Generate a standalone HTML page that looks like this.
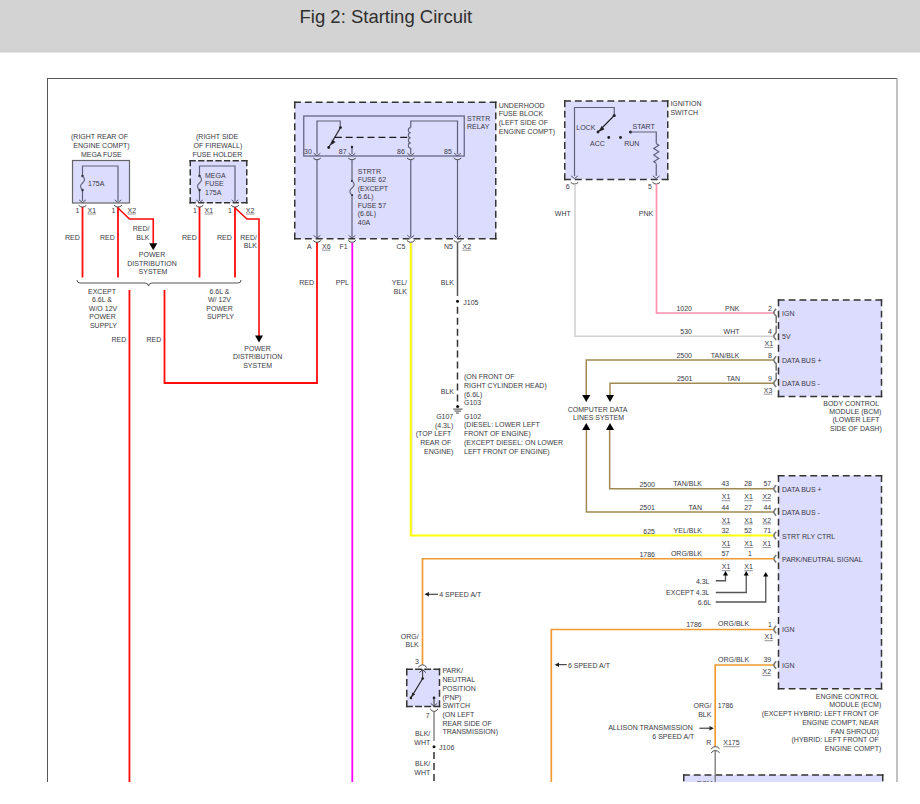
<!DOCTYPE html>
<html><head><meta charset="utf-8"><style>
html,body{margin:0;padding:0;background:#fff;width:920px;height:804px;overflow:hidden}
#hdr{position:absolute;left:0;top:0;width:920px;height:52px;background:#d3d3d3}
#ttl{position:absolute;left:299.5px;top:5px;font:18.5px/24px "Liberation Sans",sans-serif;color:#2e2e2e;white-space:nowrap}
#hb1{position:absolute;left:0;top:51px;width:920px;height:1px;background:#cecece}
#hb2{position:absolute;left:0;top:52px;width:920px;height:1px;background:#e6e6e6}
svg{position:absolute;left:0;top:0}
svg text{font-family:"Liberation Sans",sans-serif}
</style></head><body>
<div id="hdr"><div id="ttl">Fig 2: Starting Circuit</div></div><div id="hb1"></div><div id="hb2"></div>
<svg width="920" height="804" viewBox="0 0 920 804">
<defs><clipPath id="cp"><rect x="0" y="53" width="920" height="729"/></clipPath></defs>
<g clip-path="url(#cp)">
<line x1="47.5" y1="78" x2="47.5" y2="782" stroke="#555" stroke-width="1" />
<line x1="47" y1="78.5" x2="897" y2="78.5" stroke="#555" stroke-width="1" />
<line x1="897" y1="78" x2="897" y2="782" stroke="#999" stroke-width="1.2" />
<text x="71" y="139.1" fill="#3a3a44" font-size="7">(RIGHT REAR OF</text>
<text x="73.3" y="147.9" fill="#3a3a44" font-size="7">ENGINE COMPT)</text>
<text x="80.9" y="156.6" fill="#3a3a44" font-size="7">MEGA FUSE</text>
<rect x="72.5" y="160.5" width="57" height="42.5" fill="#dcdcff" stroke="#666" stroke-width="1.2" />
<polyline points="82.5,201 82.5,166 118,166 118,201" fill="none" stroke="#606078" stroke-width="1.2" />
<rect x="79" y="176.5" width="7" height="13" fill="#dcdcff" stroke="none" stroke-width="1" />
<circle cx="82.5" cy="176" r="1.2" fill="#222"/>
<circle cx="82.5" cy="190" r="1.2" fill="#222"/>
<path d="M82.5,176 Q86.5,179.5 82.5,183 Q78.5,186.5 82.5,190" fill="none" stroke="#606078" stroke-width="1.1" />
<text x="88" y="185.9" fill="#3a3a44" font-size="7">175A</text>
<polyline points="79.1,199.9 82.5,202.5 85.9,199.9" fill="none" stroke="#555566" stroke-width="1" />
<polyline points="114.6,199.9 118,202.5 121.4,199.9" fill="none" stroke="#555566" stroke-width="1" />
<text x="75.5" y="212.7" fill="#3a3a44" font-size="7">1</text>
<text x="87.5" y="212.7" fill="#3a3a44" font-size="7">X1</text>
<line x1="87.5" y1="214.0" x2="96.06" y2="214.0" stroke="#8a8a96" stroke-width="0.9" />
<text x="111.5" y="212.7" fill="#3a3a44" font-size="7">1</text>
<text x="127.5" y="212.7" fill="#3a3a44" font-size="7">X2</text>
<line x1="127.5" y1="214.0" x2="136.06" y2="214.0" stroke="#8a8a96" stroke-width="0.9" />
<text x="196" y="139.1" fill="#3a3a44" font-size="7">(RIGHT SIDE</text>
<text x="193.5" y="147.9" fill="#3a3a44" font-size="7">OF FIREWALL)</text>
<text x="192.5" y="156.9" fill="#3a3a44" font-size="7">FUSE HOLDER</text>
<rect x="190.25" y="160.75" width="56.5" height="42" fill="#dcdcff" stroke="none" stroke-width="1" />
<line x1="189.5" y1="160.75" x2="247.5" y2="160.75" stroke="#333" stroke-width="1.5" stroke-dasharray="6.3,2.317"/>
<line x1="189.5" y1="202.75" x2="247.5" y2="202.75" stroke="#333" stroke-width="1.5" stroke-dasharray="6.3,2.317"/>
<line x1="190.25" y1="160.0" x2="190.25" y2="203.5" stroke="#333" stroke-width="1.5" stroke-dasharray="6.3,3.0"/>
<line x1="246.75" y1="160.0" x2="246.75" y2="203.5" stroke="#333" stroke-width="1.5" stroke-dasharray="6.3,3.0"/>
<polyline points="199.5,201 199.5,166 235,166 235,201" fill="none" stroke="#606078" stroke-width="1.2" />
<rect x="196" y="176.5" width="7" height="13" fill="#dcdcff" stroke="none" stroke-width="1" />
<circle cx="199.5" cy="176" r="1.2" fill="#222"/>
<circle cx="199.5" cy="190" r="1.2" fill="#222"/>
<path d="M199.5,176 Q203.5,179.5 199.5,183 Q195.5,186.5 199.5,190" fill="none" stroke="#606078" stroke-width="1.1" />
<text x="205" y="177.9" fill="#3a3a44" font-size="7">MEGA</text>
<text x="205" y="186.4" fill="#3a3a44" font-size="7">FUSE</text>
<text x="205" y="194.9" fill="#3a3a44" font-size="7">175A</text>
<polyline points="196.1,199.9 199.5,202.5 202.9,199.9" fill="none" stroke="#555566" stroke-width="1" />
<polyline points="231.6,199.9 235,202.5 238.4,199.9" fill="none" stroke="#555566" stroke-width="1" />
<text x="193" y="212.7" fill="#3a3a44" font-size="7">1</text>
<text x="204.5" y="212.7" fill="#3a3a44" font-size="7">X1</text>
<line x1="204.5" y1="214.0" x2="213.06" y2="214.0" stroke="#8a8a96" stroke-width="0.9" />
<text x="228" y="212.7" fill="#3a3a44" font-size="7">1</text>
<text x="245.75" y="212.7" fill="#3a3a44" font-size="7">X2</text>
<line x1="245.75" y1="214.0" x2="254.31" y2="214.0" stroke="#8a8a96" stroke-width="0.9" />
<line x1="82.5" y1="207" x2="82.5" y2="277.5" stroke="#ff0a0a" stroke-width="1.8" />
<line x1="118" y1="207" x2="118" y2="277.5" stroke="#ff0a0a" stroke-width="1.8" />
<line x1="199.5" y1="207" x2="199.5" y2="277.5" stroke="#ff0a0a" stroke-width="1.8" />
<line x1="235" y1="207" x2="235" y2="277.5" stroke="#ff0a0a" stroke-width="1.8" />
<polyline points="118,208 129.5,219 153.25,219 153.25,244" fill="none" stroke="#ff0a0a" stroke-width="1.6" />
<polygon points="149.25,243.2 157.25,243.2 153.25,250.2" fill="#000"/>
<polyline points="235,208 247,219 259,219 259,336" fill="none" stroke="#ff0a0a" stroke-width="1.6" />
<polygon points="255.0,335.4 263.0,335.4 259,342.4" fill="#000"/>
<path d="M78.7,205.3 Q82.5,208.9 86.3,205.3" fill="none" stroke="#444" stroke-width="1" />
<path d="M114.2,205.3 Q118,208.9 121.8,205.3" fill="none" stroke="#444" stroke-width="1" />
<path d="M195.7,205.3 Q199.5,208.9 203.3,205.3" fill="none" stroke="#444" stroke-width="1" />
<path d="M231.2,205.3 Q235,208.9 238.8,205.3" fill="none" stroke="#444" stroke-width="1" />
<text x="65" y="239.9" fill="#3a3a44" font-size="7">RED</text>
<text x="100" y="239.9" fill="#3a3a44" font-size="7">RED</text>
<text x="149.5" y="230.9" text-anchor="end" fill="#3a3a44" font-size="7">RED/</text>
<text x="149.5" y="239.9" text-anchor="end" fill="#3a3a44" font-size="7">BLK</text>
<text x="152" y="257.4" text-anchor="middle" fill="#3a3a44" font-size="7">POWER</text>
<text x="152" y="266.1" text-anchor="middle" fill="#3a3a44" font-size="7">DISTRIBUTION</text>
<text x="153" y="274.4" text-anchor="middle" fill="#3a3a44" font-size="7">SYSTEM</text>
<text x="182" y="239.9" fill="#3a3a44" font-size="7">RED</text>
<text x="217" y="239.9" fill="#3a3a44" font-size="7">RED</text>
<text x="257" y="239.9" text-anchor="end" fill="#3a3a44" font-size="7">RED/</text>
<text x="257" y="248.2" text-anchor="end" fill="#3a3a44" font-size="7">BLK</text>
<path d="M77,280 Q77,283 80,283 L145,283 Q148,283 148.5,286 Q149,283 152,283 L238,283 Q241,283 241,280" fill="none" stroke="#555" stroke-width="1" />
<text x="102" y="293.9" text-anchor="middle" fill="#3a3a44" font-size="7">EXCEPT</text>
<text x="102" y="302.4" text-anchor="middle" fill="#3a3a44" font-size="7">6.6L &amp;</text>
<text x="103" y="310.9" text-anchor="middle" fill="#3a3a44" font-size="7">W/O 12V</text>
<text x="102.5" y="319.4" text-anchor="middle" fill="#3a3a44" font-size="7">POWER</text>
<text x="103.5" y="327.9" text-anchor="middle" fill="#3a3a44" font-size="7">SUPPLY</text>
<text x="219.5" y="293.9" text-anchor="middle" fill="#3a3a44" font-size="7">6.6L &amp;</text>
<text x="219.5" y="302.4" text-anchor="middle" fill="#3a3a44" font-size="7">W/ 12V</text>
<text x="219.5" y="310.9" text-anchor="middle" fill="#3a3a44" font-size="7">POWER</text>
<text x="220.5" y="319.4" text-anchor="middle" fill="#3a3a44" font-size="7">SUPPLY</text>
<line x1="129.45" y1="290" x2="129.45" y2="782" stroke="#ff0a0a" stroke-width="1.8" />
<polyline points="164.5,290 164.5,383 317,383 317,242" fill="none" stroke="#ff0a0a" stroke-width="1.8" />
<text x="111.5" y="342.4" fill="#3a3a44" font-size="7">RED</text>
<text x="146.5" y="342.4" fill="#3a3a44" font-size="7">RED</text>
<text x="257.6" y="350.9" text-anchor="middle" fill="#3a3a44" font-size="7">POWER</text>
<text x="257.6" y="359.2" text-anchor="middle" fill="#3a3a44" font-size="7">DISTRIBUTION</text>
<text x="257.6" y="367.9" text-anchor="middle" fill="#3a3a44" font-size="7">SYSTEM</text>
<rect x="294.75" y="102.25" width="201" height="136.5" fill="#dcdcff" stroke="none" stroke-width="1" />
<line x1="294.0" y1="102.25" x2="496.5" y2="102.25" stroke="#333" stroke-width="1.5" stroke-dasharray="6.9,3.967"/>
<line x1="294.0" y1="238.75" x2="496.5" y2="238.75" stroke="#333" stroke-width="1.5" stroke-dasharray="6.9,3.967"/>
<line x1="294.75" y1="101.5" x2="294.75" y2="239.5" stroke="#333" stroke-width="1.5" stroke-dasharray="6.9,4.025"/>
<line x1="495.75" y1="101.5" x2="495.75" y2="239.5" stroke="#333" stroke-width="1.5" stroke-dasharray="6.9,4.025"/>
<rect x="303.75" y="116" width="160.5" height="40" fill="#dcdcff" stroke="#666688" stroke-width="1.3" />
<text x="467" y="121.0" fill="#3a3a44" font-size="7">STRTR</text>
<text x="467" y="128.8" fill="#3a3a44" font-size="7">RELAY</text>
<text x="498.75" y="107.75" fill="#3a3a44" font-size="7">UNDERHOOD</text>
<text x="498.75" y="116.0" fill="#3a3a44" font-size="7">FUSE BLOCK</text>
<text x="498.75" y="124.75" fill="#3a3a44" font-size="7">(LEFT SIDE OF</text>
<text x="498.75" y="133.5" fill="#3a3a44" font-size="7">ENGINE COMPT)</text>
<polyline points="317,154 317,121 340.25,121 340.25,127.5" fill="none" stroke="#606078" stroke-width="1.2" />
<circle cx="340.5" cy="127.6" r="1.4" fill="#222"/>
<line x1="340.5" y1="127.6" x2="328.7" y2="147.5" stroke="#222" stroke-width="1.1" />
<polygon points="331.2,145 332.0,139.6 335.6,141.9" fill="#222"/>
<circle cx="328.7" cy="147.5" r="1.4" fill="#222"/>
<line x1="334.8" y1="137.4" x2="408.3" y2="137.4" stroke="#1a1a1a" stroke-width="1.4" stroke-dasharray="7,3.9"/>
<line x1="352" y1="147" x2="352" y2="154" stroke="#606078" stroke-width="1.2" />
<circle cx="352" cy="147" r="1.2" fill="#222"/>
<polyline points="410.75,127.5 410.75,121 457.5,121 457.5,154" fill="none" stroke="#606078" stroke-width="1.2" />
<path d="M410.75,127.6 c-3.2,0 -3.2,5.1 0,5.1 c-3.2,0 -3.2,5.1 0,5.1 c-3.2,0 -3.2,5.1 0,5.1 c-3.2,0 -3.2,5.1 0,5.1" fill="none" stroke="#606078" stroke-width="1.1" />
<line x1="410.75" y1="148" x2="410.75" y2="154" stroke="#606078" stroke-width="1.2" />
<polyline points="313.6,153.20000000000002 317,155.8 320.4,153.20000000000002" fill="none" stroke="#555566" stroke-width="1" />
<path d="M313.2,158 Q317,161.6 320.8,158" fill="none" stroke="#444" stroke-width="1" />
<polyline points="348.6,153.20000000000002 352,155.8 355.4,153.20000000000002" fill="none" stroke="#555566" stroke-width="1" />
<path d="M348.2,158 Q352,161.6 355.8,158" fill="none" stroke="#444" stroke-width="1" />
<polyline points="407.35,153.20000000000002 410.75,155.8 414.15,153.20000000000002" fill="none" stroke="#555566" stroke-width="1" />
<path d="M406.95,158 Q410.75,161.6 414.55,158" fill="none" stroke="#444" stroke-width="1" />
<polyline points="454.1,153.20000000000002 457.5,155.8 460.9,153.20000000000002" fill="none" stroke="#555566" stroke-width="1" />
<path d="M453.7,158 Q457.5,161.6 461.3,158" fill="none" stroke="#444" stroke-width="1" />
<text x="304" y="153.9" fill="#3a3a44" font-size="7">30</text>
<text x="338.75" y="153.9" fill="#3a3a44" font-size="7">87</text>
<text x="397" y="153.9" fill="#3a3a44" font-size="7">86</text>
<text x="444" y="153.9" fill="#3a3a44" font-size="7">85</text>
<line x1="317" y1="160" x2="317" y2="237" stroke="#606078" stroke-width="1.2" />
<line x1="410.75" y1="160" x2="410.75" y2="237" stroke="#606078" stroke-width="1.2" />
<line x1="457.5" y1="160" x2="457.5" y2="237" stroke="#606078" stroke-width="1.2" />
<line x1="352" y1="160" x2="352" y2="181" stroke="#606078" stroke-width="1.2" />
<line x1="352" y1="195" x2="352" y2="237" stroke="#606078" stroke-width="1.2" />
<circle cx="352" cy="181" r="1.1" fill="#222"/>
<circle cx="352" cy="195" r="1.1" fill="#222"/>
<path d="M352,181 Q356.3,184.5 352,188 Q347.7,191.5 352,195" fill="none" stroke="#606078" stroke-width="1.1" />
<text x="357.75" y="173.9" fill="#3a3a44" font-size="7">STRTR</text>
<text x="357.75" y="182.4" fill="#3a3a44" font-size="7">FUSE 62</text>
<text x="357.75" y="190.9" fill="#3a3a44" font-size="7">(EXCEPT</text>
<text x="357.75" y="199.4" fill="#3a3a44" font-size="7">6.6L)</text>
<text x="357.75" y="207.9" fill="#3a3a44" font-size="7">FUSE 57</text>
<text x="357.75" y="216.4" fill="#3a3a44" font-size="7">(6.6L)</text>
<text x="357.75" y="224.9" fill="#3a3a44" font-size="7">40A</text>
<polyline points="313.6,235.4 317,238 320.4,235.4" fill="none" stroke="#555566" stroke-width="1" />
<path d="M313.2,240.5 Q317,244.1 320.8,240.5" fill="none" stroke="#444" stroke-width="1" />
<polyline points="348.6,235.4 352,238 355.4,235.4" fill="none" stroke="#555566" stroke-width="1" />
<path d="M348.2,240.5 Q352,244.1 355.8,240.5" fill="none" stroke="#444" stroke-width="1" />
<polyline points="407.35,235.4 410.75,238 414.15,235.4" fill="none" stroke="#555566" stroke-width="1" />
<path d="M406.95,240.5 Q410.75,244.1 414.55,240.5" fill="none" stroke="#444" stroke-width="1" />
<polyline points="454.1,235.4 457.5,238 460.9,235.4" fill="none" stroke="#555566" stroke-width="1" />
<path d="M453.7,240.5 Q457.5,244.1 461.3,240.5" fill="none" stroke="#444" stroke-width="1" />
<text x="307" y="248.9" fill="#3a3a44" font-size="7">A</text>
<text x="322" y="248.9" fill="#3a3a44" font-size="7">X6</text>
<line x1="322" y1="250.2" x2="330.56" y2="250.2" stroke="#8a8a96" stroke-width="0.9" />
<text x="339.5" y="248.9" fill="#3a3a44" font-size="7">F1</text>
<text x="396.5" y="248.9" fill="#3a3a44" font-size="7">C5</text>
<text x="444" y="248.9" fill="#3a3a44" font-size="7">N5</text>
<text x="462.5" y="248.9" fill="#3a3a44" font-size="7">X2</text>
<line x1="462.5" y1="250.2" x2="471.06" y2="250.2" stroke="#8a8a96" stroke-width="0.9" />
<line x1="352.3" y1="243" x2="352.3" y2="782" stroke="#ff00ff" stroke-width="1.8" />
<line x1="411.9" y1="243" x2="411.9" y2="536.5" stroke="#c8c8d0" stroke-width="1" />
<polyline points="410.75,243 410.75,535.5 774,535.5" fill="none" stroke="#ffff00" stroke-width="2" />
<line x1="457.5" y1="243" x2="457.5" y2="296" stroke="#555555" stroke-width="1.5" />
<circle cx="457.5" cy="301.3" r="1.5" fill="#111"/>
<line x1="457.5" y1="306.8" x2="457.5" y2="401.4" stroke="#333" stroke-width="1.5" stroke-dasharray="7,3.95"/>
<circle cx="457.6" cy="406.6" r="1.5" fill="#111"/>
<line x1="453.2" y1="409.1" x2="462.6" y2="409.1" stroke="#333" stroke-width="0.9" />
<line x1="454.4" y1="411.1" x2="460.9" y2="411.1" stroke="#333" stroke-width="0.9" />
<line x1="455.9" y1="413.1" x2="458.9" y2="413.1" stroke="#333" stroke-width="0.9" />
<text x="314" y="285.4" text-anchor="end" fill="#3a3a44" font-size="7">RED</text>
<text x="349" y="285.4" text-anchor="end" fill="#3a3a44" font-size="7">PPL</text>
<text x="407" y="285.4" text-anchor="end" fill="#3a3a44" font-size="7">YEL/</text>
<text x="407" y="293.65" text-anchor="end" fill="#3a3a44" font-size="7">BLK</text>
<text x="454" y="285.4" text-anchor="end" fill="#3a3a44" font-size="7">BLK</text>
<text x="463.25" y="304.9" fill="#3a3a44" font-size="7">J105</text>
<text x="454" y="394.15" text-anchor="end" fill="#3a3a44" font-size="7">BLK</text>
<text x="464" y="379.15" fill="#3a3a44" font-size="7">(ON FRONT OF</text>
<text x="464" y="387.85" fill="#3a3a44" font-size="7">RIGHT CYLINDER HEAD)</text>
<text x="464" y="396.55" fill="#3a3a44" font-size="7">(6.6L)</text>
<text x="464" y="405.25" fill="#3a3a44" font-size="7">G103</text>
<text x="464" y="418.65" fill="#3a3a44" font-size="7">G102</text>
<text x="464" y="427.4" fill="#3a3a44" font-size="7">(DIESEL: LOWER LEFT</text>
<text x="464" y="436.15" fill="#3a3a44" font-size="7">FRONT OF ENGINE)</text>
<text x="464" y="444.9" fill="#3a3a44" font-size="7">(EXCEPT DIESEL: ON LOWER</text>
<text x="464" y="453.65" fill="#3a3a44" font-size="7">LEFT FRONT OF ENGINE)</text>
<text x="453.25" y="419.15" text-anchor="end" fill="#3a3a44" font-size="7">G107</text>
<text x="453.25" y="427.9" text-anchor="end" fill="#3a3a44" font-size="7">(4.3L)</text>
<text x="451.25" y="436.15" text-anchor="end" fill="#3a3a44" font-size="7">(TOP LEFT</text>
<text x="451.25" y="445.4" text-anchor="end" fill="#3a3a44" font-size="7">REAR OF</text>
<text x="453.25" y="454.15" text-anchor="end" fill="#3a3a44" font-size="7">ENGINE)</text>
<rect x="564.75" y="101" width="103" height="78.5" fill="#dcdcff" stroke="none" stroke-width="1" />
<line x1="564.0" y1="101" x2="668.5" y2="101" stroke="#333" stroke-width="1.5" stroke-dasharray="6.9,3.944"/>
<line x1="564.0" y1="179.5" x2="668.5" y2="179.5" stroke="#333" stroke-width="1.5" stroke-dasharray="6.9,3.944"/>
<line x1="564.75" y1="100.25" x2="564.75" y2="180.25" stroke="#333" stroke-width="1.5" stroke-dasharray="6.9,3.543"/>
<line x1="667.75" y1="100.25" x2="667.75" y2="180.25" stroke="#333" stroke-width="1.5" stroke-dasharray="6.9,3.543"/>
<text x="670.4" y="106.1" fill="#3a3a44" font-size="7">IGNITION</text>
<text x="670.4" y="115.2" fill="#3a3a44" font-size="7">SWITCH</text>
<polyline points="574.5,176 574.5,107.5 614.25,107.5 614.25,115.5" fill="none" stroke="#606078" stroke-width="1.2" />
<circle cx="614.25" cy="115.5" r="1.5" fill="#222"/>
<line x1="614.25" y1="115.5" x2="598" y2="132" stroke="#222" stroke-width="1.1" />
<polygon points="599.5,131.5 601.3,126 604.6,129.2" fill="#222"/>
<circle cx="598" cy="132" r="1.4" fill="#222"/>
<circle cx="608.75" cy="137.5" r="1.4" fill="#222"/>
<circle cx="620.5" cy="137.5" r="1.4" fill="#222"/>
<circle cx="630.5" cy="132" r="1.5" fill="#222"/>
<polyline points="630.5,132 656.25,132 656.25,143.5" fill="none" stroke="#606078" stroke-width="1.2" />
<path d="M656.25,143.5 l2.5,1.7 l-5,3.3 l5,3.3 l-5,3.3 l5,3.3 l-5,3.3 l2.5,1.6" fill="none" stroke="#606078" stroke-width="1.2" />
<line x1="656.25" y1="163.7" x2="656.25" y2="176" stroke="#606078" stroke-width="1.2" />
<polyline points="571.1,175.9 574.5,178.5 577.9,175.9" fill="none" stroke="#555566" stroke-width="1" />
<polyline points="652.85,175.9 656.25,178.5 659.65,175.9" fill="none" stroke="#555566" stroke-width="1" />
<path d="M570.7,182.3 Q574.5,185.9 578.3,182.3" fill="none" stroke="#444" stroke-width="1" />
<path d="M652.45,182.3 Q656.25,185.9 660.05,182.3" fill="none" stroke="#444" stroke-width="1" />
<text x="576.25" y="130.4" fill="#3a3a44" font-size="7">LOCK</text>
<text x="590" y="146.15" fill="#3a3a44" font-size="7">ACC</text>
<text x="624.25" y="146.15" fill="#3a3a44" font-size="7">RUN</text>
<text x="632.5" y="129.4" fill="#3a3a44" font-size="7">START</text>
<text x="565.75" y="188.9" fill="#3a3a44" font-size="7">6</text>
<text x="648" y="188.9" fill="#3a3a44" font-size="7">5</text>
<text x="570.75" y="215.9" text-anchor="end" fill="#3a3a44" font-size="7">WHT</text>
<text x="653.25" y="215.9" text-anchor="end" fill="#3a3a44" font-size="7">PNK</text>
<polyline points="575,184 575,336.25 774,336.25" fill="none" stroke="#d0d0d0" stroke-width="1.5" />
<polyline points="656.5,184 656.5,313 774,313" fill="none" stroke="#ff90b0" stroke-width="1.7" />
<rect x="778.5" y="300" width="103" height="96.5" fill="#dcdcff" stroke="none" stroke-width="1" />
<line x1="777.75" y1="300" x2="882.25" y2="300" stroke="#333" stroke-width="1.5" stroke-dasharray="6.9,3.944"/>
<line x1="777.75" y1="396.5" x2="882.25" y2="396.5" stroke="#333" stroke-width="1.5" stroke-dasharray="6.9,3.944"/>
<line x1="778.5" y1="299.25" x2="778.5" y2="397.25" stroke="#333" stroke-width="1.5" stroke-dasharray="6.9,4.487"/>
<line x1="881.5" y1="299.25" x2="881.5" y2="397.25" stroke="#333" stroke-width="1.5" stroke-dasharray="6.9,4.487"/>
<polyline points="586.25,395 586.25,360 774,360" fill="none" stroke="#a08a52" stroke-width="1.5" />
<polyline points="610,395 610,383.25 774,383.25" fill="none" stroke="#a08a52" stroke-width="1.5" />
<polygon points="582.25,395 590.25,395 586.25,402" fill="#000"/>
<polygon points="606.0,395 614.0,395 610,402" fill="#000"/>
<text x="597.5" y="411.9" text-anchor="middle" fill="#3a3a44" font-size="7">COMPUTER DATA</text>
<text x="598.6" y="420.4" text-anchor="middle" fill="#3a3a44" font-size="7">LINES SYSTEM</text>
<polygon points="582.25,430 590.25,430 586.25,423" fill="#000"/>
<polygon points="606.0,430 614.0,430 610,423" fill="#000"/>
<polyline points="586.4,430 586.4,512 774,512" fill="none" stroke="#a08a52" stroke-width="1.5" />
<polyline points="609.65,430 609.65,488.75 774,488.75" fill="none" stroke="#a08a52" stroke-width="1.5" />
<text x="692" y="311.15" text-anchor="end" fill="#3a3a44" font-size="7">1020</text>
<text x="739.5" y="311.15" text-anchor="end" fill="#3a3a44" font-size="7">PNK</text>
<text x="772" y="311.15" text-anchor="end" fill="#3a3a44" font-size="7">2</text>
<text x="782" y="316.15" fill="#3a3a44" font-size="7">IGN</text>
<text x="692" y="334.4" text-anchor="end" fill="#3a3a44" font-size="7">530</text>
<text x="739.5" y="334.4" text-anchor="end" fill="#3a3a44" font-size="7">WHT</text>
<text x="772" y="334.4" text-anchor="end" fill="#3a3a44" font-size="7">4</text>
<text x="782" y="339.4" fill="#3a3a44" font-size="7">5V</text>
<text x="764.5" y="346.15" fill="#3a3a44" font-size="7">X1</text>
<line x1="764.5" y1="347.45" x2="773.06" y2="347.45" stroke="#8a8a96" stroke-width="0.9" />
<text x="692" y="357.9" text-anchor="end" fill="#3a3a44" font-size="7">2500</text>
<text x="739.5" y="357.9" text-anchor="end" fill="#3a3a44" font-size="7">TAN/BLK</text>
<text x="772" y="357.9" text-anchor="end" fill="#3a3a44" font-size="7">8</text>
<text x="782" y="363.15" fill="#3a3a44" font-size="7">DATA BUS +</text>
<text x="692.5" y="381.15" text-anchor="end" fill="#3a3a44" font-size="7">2501</text>
<text x="740" y="381.15" text-anchor="end" fill="#3a3a44" font-size="7">TAN</text>
<text x="772" y="381.15" text-anchor="end" fill="#3a3a44" font-size="7">9</text>
<text x="782" y="386.15" fill="#3a3a44" font-size="7">DATA BUS -</text>
<text x="763.75" y="392.9" fill="#3a3a44" font-size="7">X3</text>
<line x1="763.75" y1="394.2" x2="772.31" y2="394.2" stroke="#8a8a96" stroke-width="0.9" />
<text x="823.25" y="405.65" fill="#3a3a44" font-size="7">BODY CONTROL</text>
<text x="829.25" y="413.65" fill="#3a3a44" font-size="7">MODULE (BCM)</text>
<text x="832.5" y="422.4" fill="#3a3a44" font-size="7">(LOWER LEFT</text>
<text x="830" y="431.15" fill="#3a3a44" font-size="7">SIDE OF DASH)</text>
<path d="M776.2,308.7 Q773.2,312.0 773.9,312.5 Q773.2,313.0 776.2,316.3 L776.2,323.3" fill="none" stroke="#7a7a7a" stroke-width="1.6" />
<path d="M776.2,325.45 L776.2,332.45 Q773.2,335.75 773.9,336.25 Q773.2,336.75 776.2,340.05" fill="none" stroke="#7a7a7a" stroke-width="1.6" />
<path d="M776.2,356.2 Q773.2,359.5 773.9,360 Q773.2,360.5 776.2,363.8 L776.2,370.8" fill="none" stroke="#7a7a7a" stroke-width="1.6" />
<path d="M776.2,372.45 L776.2,379.45 Q773.2,382.75 773.9,383.25 Q773.2,383.75 776.2,387.05" fill="none" stroke="#7a7a7a" stroke-width="1.6" />
<rect x="778.5" y="475.75" width="103" height="213" fill="#dcdcff" stroke="none" stroke-width="1" />
<line x1="777.75" y1="475.75" x2="882.25" y2="475.75" stroke="#333" stroke-width="1.5" stroke-dasharray="6.9,3.944"/>
<line x1="777.75" y1="688.75" x2="882.25" y2="688.75" stroke="#333" stroke-width="1.5" stroke-dasharray="6.9,3.944"/>
<line x1="778.5" y1="475.0" x2="778.5" y2="689.5" stroke="#333" stroke-width="1.5" stroke-dasharray="6.9,4.026"/>
<line x1="881.5" y1="475.0" x2="881.5" y2="689.5" stroke="#333" stroke-width="1.5" stroke-dasharray="6.9,4.026"/>
<text x="655" y="486.75" text-anchor="end" fill="#3a3a44" font-size="7">2500</text>
<text x="702" y="486.25" text-anchor="end" fill="#3a3a44" font-size="7">TAN/BLK</text>
<text x="729.25" y="486.4" text-anchor="end" fill="#3a3a44" font-size="7">43</text>
<text x="752" y="486.4" text-anchor="end" fill="#3a3a44" font-size="7">28</text>
<text x="771.25" y="486.4" text-anchor="end" fill="#3a3a44" font-size="7">57</text>
<text x="721.75" y="499.4" fill="#3a3a44" font-size="7">X1</text>
<line x1="721.75" y1="500.7" x2="730.31" y2="500.7" stroke="#8a8a96" stroke-width="0.9" />
<text x="744.25" y="499.4" fill="#3a3a44" font-size="7">X1</text>
<line x1="744.25" y1="500.7" x2="752.81" y2="500.7" stroke="#8a8a96" stroke-width="0.9" />
<text x="762.5" y="499.4" fill="#3a3a44" font-size="7">X2</text>
<line x1="762.5" y1="500.7" x2="771.06" y2="500.7" stroke="#8a8a96" stroke-width="0.9" />
<text x="782" y="491.9" fill="#3a3a44" font-size="7">DATA BUS +</text>
<path d="M776.2,484.95 Q773.2,488.25 773.9,488.75 Q773.2,489.25 776.2,492.55" fill="none" stroke="#7a7a7a" stroke-width="1.6" />
<text x="655" y="510.0" text-anchor="end" fill="#3a3a44" font-size="7">2501</text>
<text x="702" y="509.5" text-anchor="end" fill="#3a3a44" font-size="7">TAN</text>
<text x="729.25" y="509.65" text-anchor="end" fill="#3a3a44" font-size="7">44</text>
<text x="752" y="509.65" text-anchor="end" fill="#3a3a44" font-size="7">27</text>
<text x="771.25" y="509.65" text-anchor="end" fill="#3a3a44" font-size="7">44</text>
<text x="721.75" y="522.65" fill="#3a3a44" font-size="7">X1</text>
<line x1="721.75" y1="523.95" x2="730.31" y2="523.95" stroke="#8a8a96" stroke-width="0.9" />
<text x="744.25" y="522.65" fill="#3a3a44" font-size="7">X1</text>
<line x1="744.25" y1="523.95" x2="752.81" y2="523.95" stroke="#8a8a96" stroke-width="0.9" />
<text x="762.5" y="522.65" fill="#3a3a44" font-size="7">X2</text>
<line x1="762.5" y1="523.95" x2="771.06" y2="523.95" stroke="#8a8a96" stroke-width="0.9" />
<text x="782" y="515.15" fill="#3a3a44" font-size="7">DATA BUS -</text>
<path d="M776.2,508.2 Q773.2,511.5 773.9,512 Q773.2,512.5 776.2,515.8" fill="none" stroke="#7a7a7a" stroke-width="1.6" />
<text x="655" y="533.5" text-anchor="end" fill="#3a3a44" font-size="7">625</text>
<text x="702" y="533.0" text-anchor="end" fill="#3a3a44" font-size="7">YEL/BLK</text>
<text x="729.25" y="533.15" text-anchor="end" fill="#3a3a44" font-size="7">32</text>
<text x="752" y="533.15" text-anchor="end" fill="#3a3a44" font-size="7">52</text>
<text x="771.25" y="533.15" text-anchor="end" fill="#3a3a44" font-size="7">71</text>
<text x="721.75" y="546.15" fill="#3a3a44" font-size="7">X1</text>
<line x1="721.75" y1="547.45" x2="730.31" y2="547.45" stroke="#8a8a96" stroke-width="0.9" />
<text x="744.25" y="546.15" fill="#3a3a44" font-size="7">X1</text>
<line x1="744.25" y1="547.45" x2="752.81" y2="547.45" stroke="#8a8a96" stroke-width="0.9" />
<text x="762.5" y="546.15" fill="#3a3a44" font-size="7">X1</text>
<line x1="762.5" y1="547.45" x2="771.06" y2="547.45" stroke="#8a8a96" stroke-width="0.9" />
<text x="782" y="538.65" fill="#3a3a44" font-size="7">STRT RLY CTRL</text>
<path d="M776.2,531.7 Q773.2,535.0 773.9,535.5 Q773.2,536.0 776.2,539.3" fill="none" stroke="#7a7a7a" stroke-width="1.6" />
<text x="655" y="556.75" text-anchor="end" fill="#3a3a44" font-size="7">1786</text>
<text x="702" y="556.25" text-anchor="end" fill="#3a3a44" font-size="7">ORG/BLK</text>
<text x="729.25" y="556.4" text-anchor="end" fill="#3a3a44" font-size="7">57</text>
<text x="752" y="556.4" text-anchor="end" fill="#3a3a44" font-size="7">1</text>
<text x="721.75" y="569.4" fill="#3a3a44" font-size="7">X1</text>
<line x1="721.75" y1="570.7" x2="730.31" y2="570.7" stroke="#8a8a96" stroke-width="0.9" />
<text x="744.25" y="569.4" fill="#3a3a44" font-size="7">X1</text>
<line x1="744.25" y1="570.7" x2="752.81" y2="570.7" stroke="#8a8a96" stroke-width="0.9" />
<text x="782" y="561.9" fill="#3a3a44" font-size="7">PARK/NEUTRAL SIGNAL</text>
<path d="M776.2,554.95 Q773.2,558.25 773.9,558.75 Q773.2,559.25 776.2,562.55" fill="none" stroke="#7a7a7a" stroke-width="1.6" />
<polyline points="715.75,580.75 725.5,580.75 725.5,575" fill="none" stroke="#555" stroke-width="1.3" />
<polygon points="723.0,575.5 728.0,575.5 725.5,571" fill="#000"/>
<polyline points="715.75,592.5 746.25,592.5 746.25,575" fill="none" stroke="#555" stroke-width="1.3" />
<polygon points="743.75,575.5 748.75,575.5 746.25,571" fill="#000"/>
<polyline points="715.75,602 765.75,602 765.75,575" fill="none" stroke="#555" stroke-width="1.3" />
<polygon points="763.25,576.5 768.25,576.5 765.75,572" fill="#000"/>
<text x="709.5" y="583.65" text-anchor="end" fill="#3a3a44" font-size="7">4.3L</text>
<text x="709.5" y="595.4" text-anchor="end" fill="#3a3a44" font-size="7">EXCEPT 4.3L</text>
<text x="711.25" y="604.9" text-anchor="end" fill="#3a3a44" font-size="7">6.6L</text>
<polyline points="774,629.5 551.3,629.5 551.3,782" fill="none" stroke="#f09a30" stroke-width="1.7" />
<text x="701.75" y="626.9" text-anchor="end" fill="#3a3a44" font-size="7">1786</text>
<text x="718" y="626.4" fill="#3a3a44" font-size="7">ORG/BLK</text>
<text x="772" y="626.9" text-anchor="end" fill="#3a3a44" font-size="7">1</text>
<text x="782" y="632.4" fill="#3a3a44" font-size="7">IGN</text>
<text x="764.5" y="639.4" fill="#3a3a44" font-size="7">X1</text>
<line x1="764.5" y1="640.7" x2="773.06" y2="640.7" stroke="#8a8a96" stroke-width="0.9" />
<path d="M776.2,625.7 Q773.2,629.0 773.9,629.5 Q773.2,630.0 776.2,633.3" fill="none" stroke="#7a7a7a" stroke-width="1.6" />
<polyline points="774,665 715.2,665 715.2,746.5" fill="none" stroke="#f09a30" stroke-width="1.7" />
<text x="718" y="662.4" fill="#3a3a44" font-size="7">ORG/BLK</text>
<text x="771.25" y="662.4" text-anchor="end" fill="#3a3a44" font-size="7">39</text>
<text x="782" y="667.9" fill="#3a3a44" font-size="7">IGN</text>
<text x="762.5" y="674.3" fill="#3a3a44" font-size="7">X2</text>
<line x1="762.5" y1="675.6" x2="771.06" y2="675.6" stroke="#8a8a96" stroke-width="0.9" />
<path d="M776.2,661.2 Q773.2,664.5 773.9,665 Q773.2,665.5 776.2,668.8" fill="none" stroke="#7a7a7a" stroke-width="1.6" />
<text x="878.75" y="698.65" text-anchor="end" fill="#3a3a44" font-size="7">ENGINE CONTROL</text>
<text x="881.25" y="707.4" text-anchor="end" fill="#3a3a44" font-size="7">MODULE (ECM)</text>
<text x="878.75" y="716.15" text-anchor="end" fill="#3a3a44" font-size="7">(EXCEPT HYBRID: LEFT FRONT OF</text>
<text x="878.75" y="724.9" text-anchor="end" fill="#3a3a44" font-size="7">ENGINE COMPT, NEAR</text>
<text x="879" y="733.65" text-anchor="end" fill="#3a3a44" font-size="7">FAN SHROUD)</text>
<text x="878.75" y="742.4" text-anchor="end" fill="#3a3a44" font-size="7">(HYBRID: LEFT FRONT OF</text>
<text x="881.25" y="751.15" text-anchor="end" fill="#3a3a44" font-size="7">ENGINE COMPT)</text>
<polyline points="774,558.75 422.5,558.75 422.5,664.5" fill="none" stroke="#f09a30" stroke-width="1.7" />
<line x1="425.75" y1="594.25" x2="438" y2="594.25" stroke="#222" stroke-width="1" />
<polygon points="424.5,594.25 429,592 429,596.5" fill="#222"/>
<text x="439.25" y="597.4" fill="#3a3a44" font-size="7">4 SPEED A/T</text>
<text x="418.75" y="638.65" text-anchor="end" fill="#3a3a44" font-size="7">ORG/</text>
<text x="418.75" y="647.4" text-anchor="end" fill="#3a3a44" font-size="7">BLK</text>
<text x="419" y="663.9" text-anchor="end" fill="#3a3a44" font-size="7">3</text>
<path d="M418.2,667.3 Q422.5,662.3 426.7,667.3" fill="none" stroke="#444" stroke-width="1" />
<rect x="406.75" y="669.25" width="32.75" height="37.25" fill="#dcdcff" stroke="none" stroke-width="1" />
<line x1="406.0" y1="669.25" x2="440.25" y2="669.25" stroke="#333" stroke-width="1.5" stroke-dasharray="6.9,2.217"/>
<line x1="406.0" y1="706.5" x2="440.25" y2="706.5" stroke="#333" stroke-width="1.5" stroke-dasharray="6.9,2.217"/>
<line x1="406.75" y1="668.5" x2="406.75" y2="707.25" stroke="#333" stroke-width="1.5" stroke-dasharray="6.9,3.717"/>
<line x1="439.5" y1="668.5" x2="439.5" y2="707.25" stroke="#333" stroke-width="1.5" stroke-dasharray="6.9,3.717"/>
<line x1="422.65" y1="669.6" x2="422.65" y2="678.5" stroke="#333" stroke-width="1" />
<polyline points="419.4,672.6 422.65,669.6 425.9,672.6" fill="none" stroke="#444" stroke-width="1" />
<circle cx="422.65" cy="678.5" r="1.3" fill="#222"/>
<line x1="422.65" y1="678.5" x2="410.9" y2="697.9" stroke="#222" stroke-width="1.1" />
<polygon points="411.6,696.8 415.2,694.3 412.2,692.5" fill="#222"/>
<circle cx="410.9" cy="697.9" r="1.3" fill="#222"/>
<circle cx="434" cy="697.9" r="1.3" fill="#222"/>
<line x1="434" y1="697.9" x2="434" y2="706" stroke="#333" stroke-width="1" />
<polyline points="430.7,703.3 434,706.3 437.2,703.3" fill="none" stroke="#444" stroke-width="1" />
<path d="M430.3,709 Q434.1,714 438,709" fill="none" stroke="#444" stroke-width="1" />
<text x="442.4" y="673.4" fill="#3a3a44" font-size="7">PARK/</text>
<text x="442.4" y="682.1" fill="#3a3a44" font-size="7">NEUTRAL</text>
<text x="442.4" y="690.8" fill="#3a3a44" font-size="7">POSITION</text>
<text x="442.4" y="699.5" fill="#3a3a44" font-size="7">(PNP)</text>
<text x="442.4" y="708.2" fill="#3a3a44" font-size="7">SWITCH</text>
<text x="442.4" y="716.9" fill="#3a3a44" font-size="7">(ON LEFT</text>
<text x="442.4" y="725.6" fill="#3a3a44" font-size="7">REAR SIDE OF</text>
<text x="442.4" y="734.3" fill="#3a3a44" font-size="7">TRANSMISSION)</text>
<text x="429.7" y="718.1" text-anchor="end" fill="#3a3a44" font-size="7">7</text>
<line x1="434" y1="711.5" x2="434" y2="741" stroke="#888" stroke-width="1.5" />
<circle cx="434" cy="746.7" r="1.5" fill="#111"/>
<line x1="434" y1="752" x2="434" y2="782" stroke="#333" stroke-width="1.5" stroke-dasharray="7,3.95"/>
<text x="430.3" y="735.5" text-anchor="end" fill="#3a3a44" font-size="7">BLK/</text>
<text x="430.3" y="744.8" text-anchor="end" fill="#3a3a44" font-size="7">WHT</text>
<text x="439.1" y="749.9" fill="#3a3a44" font-size="7">J106</text>
<text x="430.3" y="766.4" text-anchor="end" fill="#3a3a44" font-size="7">BLK/</text>
<text x="430.3" y="774.5" text-anchor="end" fill="#3a3a44" font-size="7">WHT</text>
<line x1="556" y1="664.7" x2="566.7" y2="664.7" stroke="#222" stroke-width="1" />
<polygon points="554.7,664.7 559,662.5 559,667" fill="#222"/>
<text x="567.9" y="667.7" fill="#3a3a44" font-size="7">6 SPEED A/T</text>
<text x="711.4" y="708.3" text-anchor="end" fill="#3a3a44" font-size="7">ORG/</text>
<text x="711.4" y="717.4" text-anchor="end" fill="#3a3a44" font-size="7">BLK</text>
<text x="717.7" y="708.3" fill="#3a3a44" font-size="7">1786</text>
<text x="692.8" y="729.7" text-anchor="end" fill="#3a3a44" font-size="7">ALLISON TRANSMISSION</text>
<text x="694.4" y="738.6" text-anchor="end" fill="#3a3a44" font-size="7">6 SPEED A/T</text>
<line x1="699.4" y1="728.2" x2="712" y2="728.2" stroke="#222" stroke-width="1" />
<polygon points="713.9,728.2 709.5,726 709.5,730.5" fill="#222"/>
<text x="711.4" y="745.4" text-anchor="end" fill="#3a3a44" font-size="7">R</text>
<text x="723.3" y="745.4" fill="#3a3a44" font-size="7">X175</text>
<line x1="723.3" y1="746.7" x2="739.65" y2="746.7" stroke="#8a8a96" stroke-width="0.9" />
<rect x="683.75" y="775" width="199" height="30" fill="#dcdcff" stroke="none" stroke-width="1" />
<line x1="683.0" y1="775" x2="883.5" y2="775" stroke="#333" stroke-width="1.5" stroke-dasharray="6.9,3.856"/>
<line x1="683.0" y1="805" x2="883.5" y2="805" stroke="#333" stroke-width="1.5" stroke-dasharray="6.9,3.856"/>
<line x1="683.75" y1="774.25" x2="683.75" y2="805.75" stroke="#333" stroke-width="1.5" stroke-dasharray="6.9,5.4"/>
<line x1="882.75" y1="774.25" x2="882.75" y2="805.75" stroke="#333" stroke-width="1.5" stroke-dasharray="6.9,5.4"/>
<text x="697" y="786.1" fill="#3a3a44" font-size="7">ECM</text>
<path d="M711.2,748.9 Q715.4,744.2 719.6,748.9" fill="none" stroke="#444" stroke-width="1" />
<path d="M711.2,752.8 Q715.4,748.1 719.6,752.8" fill="none" stroke="#444" stroke-width="1" />
<line x1="715.2" y1="750.5" x2="715.2" y2="782" stroke="#777" stroke-width="1.3" />
</g>
</svg>
</body></html>
